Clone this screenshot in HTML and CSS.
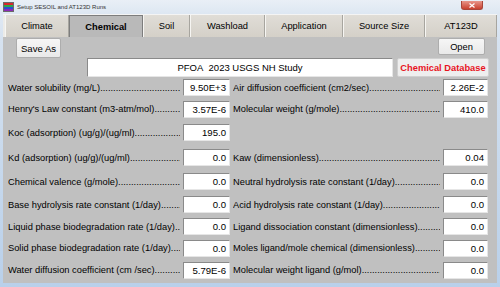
FILE: index.html
```html
<!DOCTYPE html>
<html lang="en">
	<head>
		<meta charset="UTF-8" />
		<title>Setup SESOIL and AT123D Runs</title>
		<link rel="stylesheet" href="styles.css">
	</head>
	<body>
		<div class="window">
			<div class="titlebar">
				<span class="app-icon"><i class="r"></i><i class="g"></i><i class="b"></i><i class="p"></i></span>
				<span class="title">Setup SESOIL and AT123D Runs</span>
				<span class="close">
					<svg width="8" height="5" viewBox="0 0 8 5"><path d="M1.5 0.5 L6.5 4.5 M6.5 0.5 L1.5 4.5" stroke="#fff" stroke-width="1.2" /></svg>
				</span>
			</div>

			<div class="tabs">
				<div class="tab-gap"></div>
				<div class="tab w-climate">Climate</div>
				<div class="tab active w-chemical">Chemical</div>
				<div class="tab w-soil">Soil</div>
				<div class="tab w-washload">Washload</div>
				<div class="tab w-application">Application</div>
				<div class="tab w-source">Source Size</div>
				<div class="tab w-at123d">AT123D</div>
			</div>

			<div class="panel">
				<div class="top-row">
					<button class="btn save">Save As</button>
					<button class="btn open">Open</button>
				</div>

				<div class="study-row">
					<div class="study">PFOA&nbsp; 2023 USGS NH Study</div>
					<button class="btn database">Chemical Database</button>
				</div>

				<div class="fields">
					<div class="label">Water solubility (mg/L)</div>
					<div class="value">9.50E+3</div>
					<div class="label">Air diffusion coefficient (cm2/sec)</div>
					<div class="value">2.26E-2</div>

					<div class="label">Henry's Law constant (m3-atm/mol)</div>
					<div class="value">3.57E-6</div>
					<div class="label">Molecular weight (g/mole)</div>
					<div class="value">410.0</div>

					<div class="label">Koc (adsorption) (ug/g)/(ug/ml)</div>
					<div class="value">195.0</div>
					<div></div>
					<div></div>

					<div class="label">Kd (adsorption) (ug/g)/(ug/ml)</div>
					<div class="value">0.0</div>
					<div class="label">Kaw (dimensionless)</div>
					<div class="value">0.04</div>

					<div class="label">Chemical valence (g/mole)</div>
					<div class="value">0.0</div>
					<div class="label">Neutral hydrolysis rate constant (1/day)</div>
					<div class="value">0.0</div>

					<div class="label">Base hydrolysis rate constant (1/day)</div>
					<div class="value">0.0</div>
					<div class="label">Acid hydrolysis rate constant (1/day)</div>
					<div class="value">0.0</div>

					<div class="label">Liquid phase biodegradation rate (1/day)</div>
					<div class="value">0.0</div>
					<div class="label">Ligand dissociation constant (dimensionless)</div>
					<div class="value">0.0</div>

					<div class="label">Solid phase biodegradation rate (1/day)</div>
					<div class="value">0.0</div>
					<div class="label">Moles ligand/mole chemical (dimensionless)</div>
					<div class="value">0.0</div>

					<div class="label">Water diffusion coefficient (cm /sec)</div>
					<div class="value">5.79E-6</div>
					<div class="label">Molecular weight ligand (g/mol)</div>
					<div class="value">0.0</div>
				</div>
			</div>
		</div>
	</body>
</html>
```

FILE: styles.css
```css
body {
	margin: 0;
	padding: 0;
	font-family: 'Liberation Sans', Arial, sans-serif;
	font-size: 9.3px;
	color: #000000;
	background-color: #b7cde6;
	overflow: hidden;
}

.window {
	width: 500px;
	height: 287px;
	display: flex;
	flex-direction: column;
	box-sizing: border-box;
	padding: 0 3px 4px 3px;
	background: linear-gradient(to bottom, #e4ebf4 0, #d6e2f0 40px, #b9d0ea 100%);
}

/* title bar */
.titlebar {
	height: 14px;
	display: flex;
	align-items: center;
	margin: 0 -3px;
	padding: 0 3px;
	background: linear-gradient(to bottom, #e9eff6, #dde7f2);
}

.app-icon {
	display: flex;
	flex-direction: column;
	width: 9px;
	height: 8px;
	margin-right: 3px;
	border: 1px solid #6b6b6b;
}

.app-icon i {
	flex: 1;
}

.app-icon .r { background-color: #d8262c; }
.app-icon .g { background-color: #2ca84a; }
.app-icon .b { background-color: #2c4fd0; }
.app-icon .p { background-color: #8a2ab8; }

.title {
	font-size: 6px;
	color: #333333;
}

.close {
	margin-left: auto;
	margin-right: 14px;
	width: 20px;
	height: 8px;
	margin-top: -3px;
	border-radius: 0 0 3px 3px;
	background: linear-gradient(to bottom, #e8968a, #c9412f);
	border: 1px solid #a8463a;
	border-top: none;
	display: flex;
	align-items: center;
	justify-content: center;
}

/* tabs */
.tabs {
	height: 23px;
	display: flex;
	background-color: #ecebe8;
	border-top: 1px solid #f4f4f4;
	box-sizing: border-box;
}

.tab-gap {
	width: 2px;
}

.tab {
	display: flex;
	align-items: center;
	justify-content: center;
	box-sizing: border-box;
	background: linear-gradient(to bottom, #e0ddd7, #d4d0c8);
	border-left: 1px solid #f6f5f2;
	border-right: 1px solid #a7a59f;
}

.tab.active {
	font-weight: bold;
	background: #b9b9b9;
	border: 1px solid #7d7d7d;
	border-bottom: none;
}

.w-climate { width: 64px; }
.w-chemical { width: 74px; }
.w-soil { width: 47px; }
.w-washload { width: 75px; }
.w-application { width: 78px; }
.w-source { width: 82px; }
.w-at123d { width: 72px; }

/* panel */
.panel {
	flex: 1;
	background-color: #c0c0c0;
	display: flex;
	flex-direction: column;
}

.btn {
	font-family: inherit;
	font-size: inherit;
	color: #000000;
	padding: 0;
	border: 1px solid #adadad;
	border-radius: 2px;
	background: linear-gradient(to bottom, #f6f6f6, #e9e9e9);
	cursor: pointer;
}

.top-row {
	display: flex;
	justify-content: space-between;
	align-items: flex-start;
	padding: 1px 12px 0 13px;
}

.save {
	width: 45px;
	height: 20px;
	font-size: 9.6px;
}

.open {
	width: 47px;
	height: 17px;
}

.study-row {
	display: flex;
	gap: 4px;
	padding: 0 8px 0 84px;
	height: 19px;
}

.study {
	flex: 1;
	background-color: #ffffff;
	border-top: 1px solid #8a8a8a;
	border-left: 1px solid #8a8a8a;
	border-bottom: 1px solid #e6e6e6;
	border-right: 1px solid #e6e6e6;
	display: flex;
	align-items: center;
	justify-content: center;
	font-size: 9.5px;
}

.database {
	width: 92px;
	font-weight: bold;
	color: #e8141e;
	border-color: #d0d0d0;
	background: #eeeeee;
}

/* fields */
.fields {
	display: grid;
	grid-template-columns: 172px 47px 207px 45px;
	grid-template-rows: 21px 22px 25px 25px 23px 23px 21px 22px 22px;
	column-gap: 3px;
	padding-left: 5px;
	align-items: center;
}

.label {
	display: flex;
	white-space: nowrap;
	overflow: hidden;
}

.label::after {
	content: '........................................................................................................';
	flex: 1;
	min-width: 0;
	overflow: hidden;
}

.value {
	height: 17px;
	box-sizing: border-box;
	background-color: #ffffff;
	border-top: 1px solid #8a8a8a;
	border-left: 1px solid #8a8a8a;
	border-bottom: 1px solid #e6e6e6;
	border-right: 1px solid #e6e6e6;
	display: flex;
	align-items: center;
	justify-content: flex-end;
	padding-right: 3px;
	font-size: 9.6px;
}
```
